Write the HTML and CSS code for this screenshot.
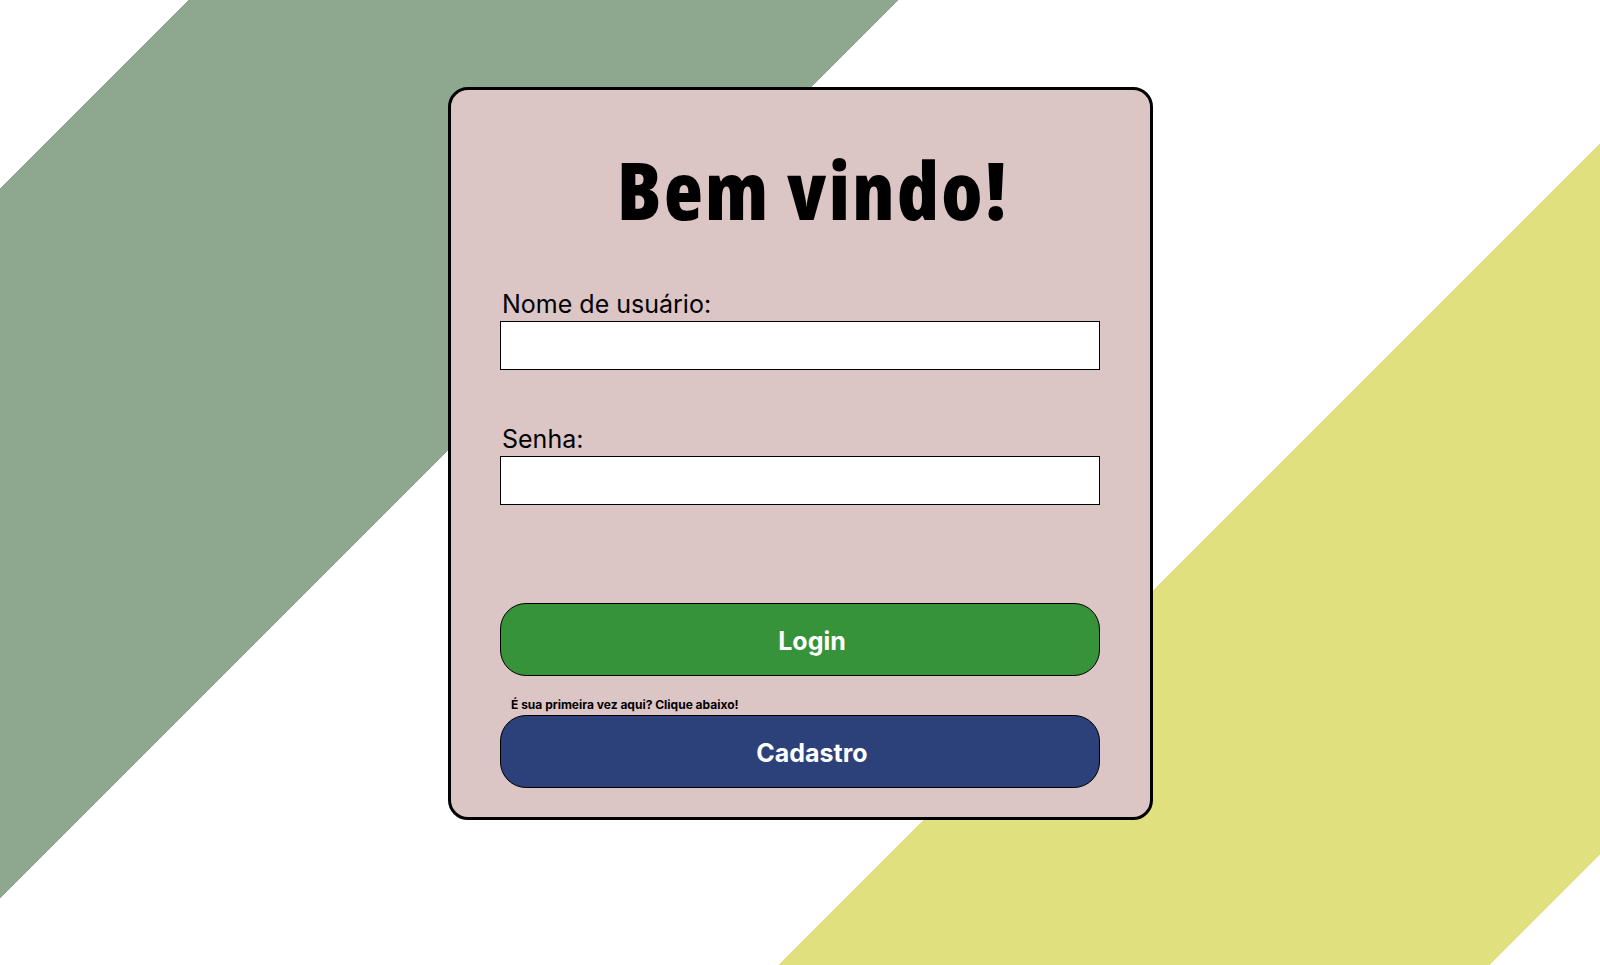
FILE: index.html
```html
<!DOCTYPE html>
<html lang="pt-BR">
<head>
<meta charset="utf-8">
<title>Bem vindo!</title>
<link rel="stylesheet" href="styles.css">
</head>
<body>
<main class="page">
  <form class="card">
    <h1 class="title">Bem vindo!</h1>
    <label class="field-label" for="user">Nome de usuário:</label>
    <input class="field" id="user" type="text">
    <label class="field-label field-label--second" for="pass">Senha:</label>
    <input class="field" id="pass" type="password">
    <button class="btn btn--login" type="button">Login</button>
    <p class="hint">É sua primeira vez aqui? Clique abaixo!</p>
    <button class="btn btn--signup" type="button">Cadastro</button>
  </form>
</main>
</body>
</html>
```

FILE: styles.css
```css
html, body {
  margin: 0;
  padding: 0;
}

body {
  width: 1600px;
  height: 965px;
  overflow: hidden;
  font-family: Inter, "Liberation Sans", sans-serif;
  background-color: #ffffff;
  background-image: linear-gradient(135deg,
    #ffffff 0px, #ffffff 133.6px,
    #8ea78f 133.6px, #8ea78f 635px,
    #ffffff 635px, #ffffff 1232.5px,
    #e0e07e 1232.5px, #e0e07e 1735.9px,
    #ffffff 1735.9px);
}

.page {
  display: flex;
  justify-content: center;
  padding-top: 87px;
}

.card {
  box-sizing: border-box;
  width: 705px;
  border: 3px solid #000;
  border-radius: 20px;
  background: #dbc5c5;
  display: flex;
  flex-direction: column;
  align-items: center;
  padding: 59px 0 29px 0;
  margin: 0;
}

.title {
  margin: 0;
  padding-left: 26px;
  font-family: "Open Sans", "Noto Sans", sans-serif;
  font-weight: 800;
  font-stretch: 75%;
  font-size: 80px;
  line-height: 80px;
  color: #000;
  letter-spacing: 2.4px;
}

.field-label {
  width: 600px;
  box-sizing: border-box;
  padding-left: 2px;
  margin-top: 61px;
  margin-bottom: 2px;
  font-size: 25px;
  line-height: 29px;
  color: #000;
}

.field-label--second {
  margin-top: 55px;
}

.field {
  box-sizing: border-box;
  width: 600px;
  height: 49px;
  margin: 0;
  border: 1px solid #000;
  border-radius: 0;
  background: #fff;
  font-family: Inter, sans-serif;
  font-size: 18px;
  padding: 0 10px;
  outline: none;
}

.btn {
  box-sizing: border-box;
  width: 600px;
  height: 73px;
  margin: 0;
  border: 1px solid #000;
  border-radius: 26px;
  padding: 3px 0 0 24px;
  font-family: Inter, sans-serif;
  font-weight: 700;
  font-size: 25px;
  color: #fff;
  cursor: pointer;
}

.btn--login {
  margin-top: 98px;
  background: #37933a;
}

.btn--signup {
  background: #2c4179;
}

.hint {
  width: 600px;
  box-sizing: border-box;
  margin: 22px 0 3px 0;
  padding-left: 11px;
  font-size: 12px;
  line-height: 14px;
  font-weight: 700;
  color: #000;
}
```
